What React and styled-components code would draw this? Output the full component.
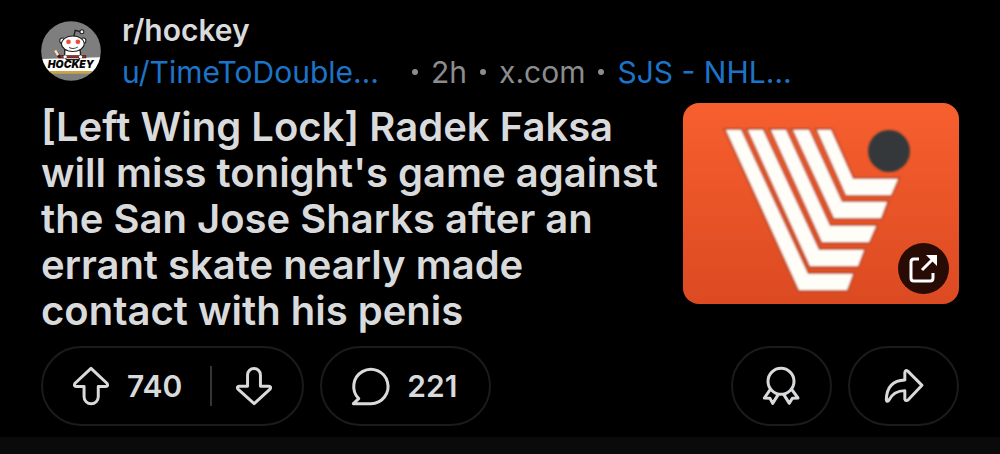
import React from "react";
import styled, { createGlobalStyle } from "styled-components";

const GlobalStyle = createGlobalStyle`
  *, *::before, *::after { box-sizing: border-box; }
  body {
    margin: 0;
    background: #0a0a0a;
    font-family: Inter, "Liberation Sans", sans-serif;
    color: #d9dadb;
  }
`;

const Post = styled.article`
  background: #000;
  padding: 9px 41px 11px;
`;

const Header = styled.header`
  display: flex;
  align-items: center;
  gap: 21px;
`;

const Avatar = styled.svg`
  flex: none;
  display: block;
  width: 60px;
  height: 60px;
`;

const Byline = styled.div`
  min-width: 0;
  flex: 1;
  font-size: 30px;
  line-height: 42px;
`;

const Community = styled.a`
  display: block;
  width: fit-content;
  color: inherit;
  font-weight: 600;
  text-decoration: none;
`;

const Meta = styled.div`
  display: flex;
  align-items: center;
  gap: 13px;
  white-space: nowrap;
  color: #8b8c8e;
`;

const MetaLink = styled.a`
  color: ${({ $muted }) => ($muted ? "inherit" : "#1c74c9")};
  text-decoration: none;
`;

const Author = styled(MetaLink)`
  min-width: 277px;
`;

const Dot = styled.span`
  flex: none;
  width: 6px;
  height: 6px;
  border-radius: 50%;
  background: currentColor;
`;

const Content = styled.div`
  display: grid;
  grid-template-columns: minmax(0, 1fr) 276px;
  align-items: start;
  gap: 16px;
  margin-top: 10px;
`;

const Title = styled.h1`
  margin: 0;
  padding-top: 1px;
  font-size: 40px;
  line-height: 46px;
  font-weight: 600;
`;

const Thumbnail = styled.a`
  position: relative;
  display: block;
  height: 201px;
  border-radius: 16px;
  overflow: hidden;
  background: linear-gradient(#f75f2e, #dc4a22);
`;

const Artwork = styled.svg`
  display: block;
  width: 100%;
  height: 100%;
`;

const ExternalBadge = styled.span`
  position: absolute;
  right: 10px;
  bottom: 10px;
  width: 51px;
  height: 51px;
  border-radius: 50%;
  background: #290b05;
`;

const Actions = styled.footer`
  display: flex;
  gap: 16px;
  margin-top: 12px;
`;

const Pill = styled.div`
  display: flex;
  align-items: center;
  height: 80px;
  border: 2px solid #1b1b1c;
  border-radius: 40px;
`;

const Spacer = styled.div`
  flex: 1;
`;

const Action = styled.button`
  display: flex;
  align-items: center;
  gap: 18px;
  height: 76px;
  margin: 0;
  padding: 0 ${({ $right }) => $right}px 0 ${({ $left }) => $left}px;
  border: 0;
  background: none;
  color: inherit;
  font: inherit;
  font-size: 30px;
  font-weight: 600;
  cursor: pointer;
`;

const Divider = styled.span`
  width: 2px;
  height: 40px;
  background: #353536;
`;

const Icon = styled.svg`
  display: block;
  flex: none;
  width: ${({ $w }) => $w}px;
  height: ${({ $h }) => $h}px;
  overflow: visible;
  fill: none;
  stroke: currentColor;
  stroke-width: 9;
  stroke-linejoin: round;
  stroke-linecap: round;
`;

const SnooAvatar = () => (
  <Avatar viewBox="35 39 179 179" role="img" aria-label="r/hockey">
    <defs>
      <clipPath id="avatar-clip">
        <circle cx="124.500" cy="128.500" r="89" />
      </clipPath>
    </defs>
    <g clipPath="url(#avatar-clip)">
      <rect x="35" y="39" width="179" height="179" fill="#7e7e7e" />
      <path d="M35 152 L214 147 V190 H35Z" fill="#fff" />
      <path d="M35 188 H214 V196 H35Z" fill="#c9a548" />
      <path d="M132 90 L137 67 L152 71" fill="none" stroke="#1c1c1c" strokeWidth="4" />
      <circle cx="157" cy="71" r="6" fill="#eee" stroke="#1c1c1c" strokeWidth="3" />
      <path d="M106 125 Q104 152 112 154 H148 Q156 140 151 125Z" fill="#fff" stroke="#1c1c1c" strokeWidth="4" />
      <circle cx="99" cy="98" r="8" fill="#fff" stroke="#1c1c1c" strokeWidth="3" />
      <circle cx="161" cy="98" r="8" fill="#fff" stroke="#1c1c1c" strokeWidth="3" />
      <ellipse cx="130" cy="107" rx="34" ry="23" fill="#fff" stroke="#1c1c1c" strokeWidth="3" />
      <circle cx="117" cy="101" r="7" fill="#ef4d3c" />
      <circle cx="145" cy="101" r="7" fill="#ef4d3c" />
      <path d="M119 118 Q132 125 145 116" fill="none" stroke="#444" strokeWidth="3" />
      <path d="M77 128 L90 146 H170" fill="none" stroke="#47150f" strokeWidth="9" />
      <path d="M77 127 L86 141" stroke="#f2dfc4" strokeWidth="8" />
      <path d="M93 146 H168" stroke="#a43a30" strokeWidth="4" />
      <circle cx="107" cy="146" r="5" fill="#fff" />
      <circle cx="153" cy="146" r="5" fill="#fff" />
      <text
        x="124"
        y="180"
        textAnchor="middle"
        fontFamily="Inter, sans-serif"
        fontSize="31"
        fontWeight="900"
        fontStyle="italic"
        fill="#050505"
      >
        HOCKEY
      </text>
    </g>
  </Avatar>
);

const LogoArtwork = () => (
  <Artwork viewBox="0 0 276 201" aria-hidden="true">
    <defs>
      <filter id="photo-soft">
        <feGaussianBlur stdDeviation="0.800" />
      </filter>
    </defs>
    <g filter="url(#photo-soft)">
      <g fill="#fffdf8" stroke="#c04d2b" strokeWidth="4" paintOrder="stroke">
        <path d="M43 27H58L125 171H170L164 187H116Z" />
        <path d="M65 27H80L136 147H181L175 163H127Z" />
        <path d="M88 27H103L147 123H193L186 139H139Z" />
        <path d="M110 27H126L159 99H204L198 115H151Z" />
        <path d="M134 27H148L170 76H215L208 92H163Z" />
      </g>
      <circle cx="206" cy="48" r="21" fill="#36393a" />
    </g>
  </Artwork>
);

const ExternalIcon = () => (
  <svg width="51" height="51" viewBox="0 0 51 51" fill="none" aria-hidden="true">
    <path
      d="M21 16H16Q13 16 13 19V35Q13 38 16 38H32Q35 38 35 35V30"
      stroke="#fff"
      strokeWidth="3"
    />
    <path d="M24 27L36 15" stroke="#fff" strokeWidth="3" />
    <path d="M28 12H39V23Z" fill="#fff" />
  </svg>
);

const UpIcon = () => (
  <Icon $w={36} $h={38} viewBox="131 78 108 115" aria-hidden="true">
    <path d="M185 82L234 128Q238 137 230 137H207V168A21 21 0 0 1 164 168V137H140Q132 137 136 128Z" />
  </Icon>
);

const DownIcon = () => (
  <Icon $w={36} $h={38} viewBox="616 83 109 115" aria-hidden="true">
    <path d="M651 107A19.500 19.500 0 0 1 690 107V141H715Q724 142 719 150L671 194L622 150Q617 142 626 141H651Z" />
  </Icon>
);

const CommentIcon = () => (
  <Icon $w={37} $h={37} viewBox="127 83 110 110" aria-hidden="true">
    <path d="M183 189A51 51 0 1 0 147 174L131 189Z" />
  </Icon>
);

const AwardIcon = () => (
  <Icon $w={36} $h={38} viewBox="129 82 108 114" aria-hidden="true">
    <circle cx="183" cy="125" r="39" />
    <path d="M151 149L133 175L150 176L158 191L175 164M215 149L234 175L217 176L208 191L191 164" />
  </Icon>
);

const ShareIcon = () => (
  <Icon $w={38} $h={34} viewBox="495 89 115 102" aria-hidden="true">
    <path d="M555 99Q557 90 564 95L607 138L566 181Q558 188 555 180V154Q521 154 506 184Q500 190 499 181Q501 124 555 122Z" />
  </Icon>
);

export default function App() {
  return (
    <>
      <GlobalStyle />
      <Post>
        <Header>
          <SnooAvatar />
          <Byline>
            <Community href="#community">r/hockey</Community>
            <Meta>
              <Author href="#author">u/TimeToDouble…</Author>
              <Dot />
              <span>2h</span>
              <Dot />
              <MetaLink href="#source" $muted>
                x.com
              </MetaLink>
              <Dot />
              <MetaLink href="#flair">SJS - NHL…</MetaLink>
            </Meta>
          </Byline>
        </Header>
        <Content>
          <Title>
            [Left Wing Lock] Radek Faksa will miss tonight's game against the San
            Jose Sharks after an errant skate nearly made contact with his penis
          </Title>
          <Thumbnail href="#link" aria-label="Open link">
            <LogoArtwork />
            <ExternalBadge>
              <ExternalIcon />
            </ExternalBadge>
          </Thumbnail>
        </Content>
        <Actions>
          <Pill>
            <Action $left={30} $right={28} aria-label="Upvote, 740">
              <UpIcon />
              740
            </Action>
            <Divider />
            <Action $left={24} $right={30} aria-label="Downvote">
              <DownIcon />
            </Action>
          </Pill>
          <Pill>
            <Action $left={30} $right={32} aria-label="Comments, 221">
              <CommentIcon />
              221
            </Action>
          </Pill>
          <Spacer />
          <Pill>
            <Action $left={30} $right={31} aria-label="Give award">
              <AwardIcon />
            </Action>
          </Pill>
          <Pill>
            <Action $left={35} $right={34} aria-label="Share">
              <ShareIcon />
            </Action>
          </Pill>
        </Actions>
      </Post>
    </>
  );
}
